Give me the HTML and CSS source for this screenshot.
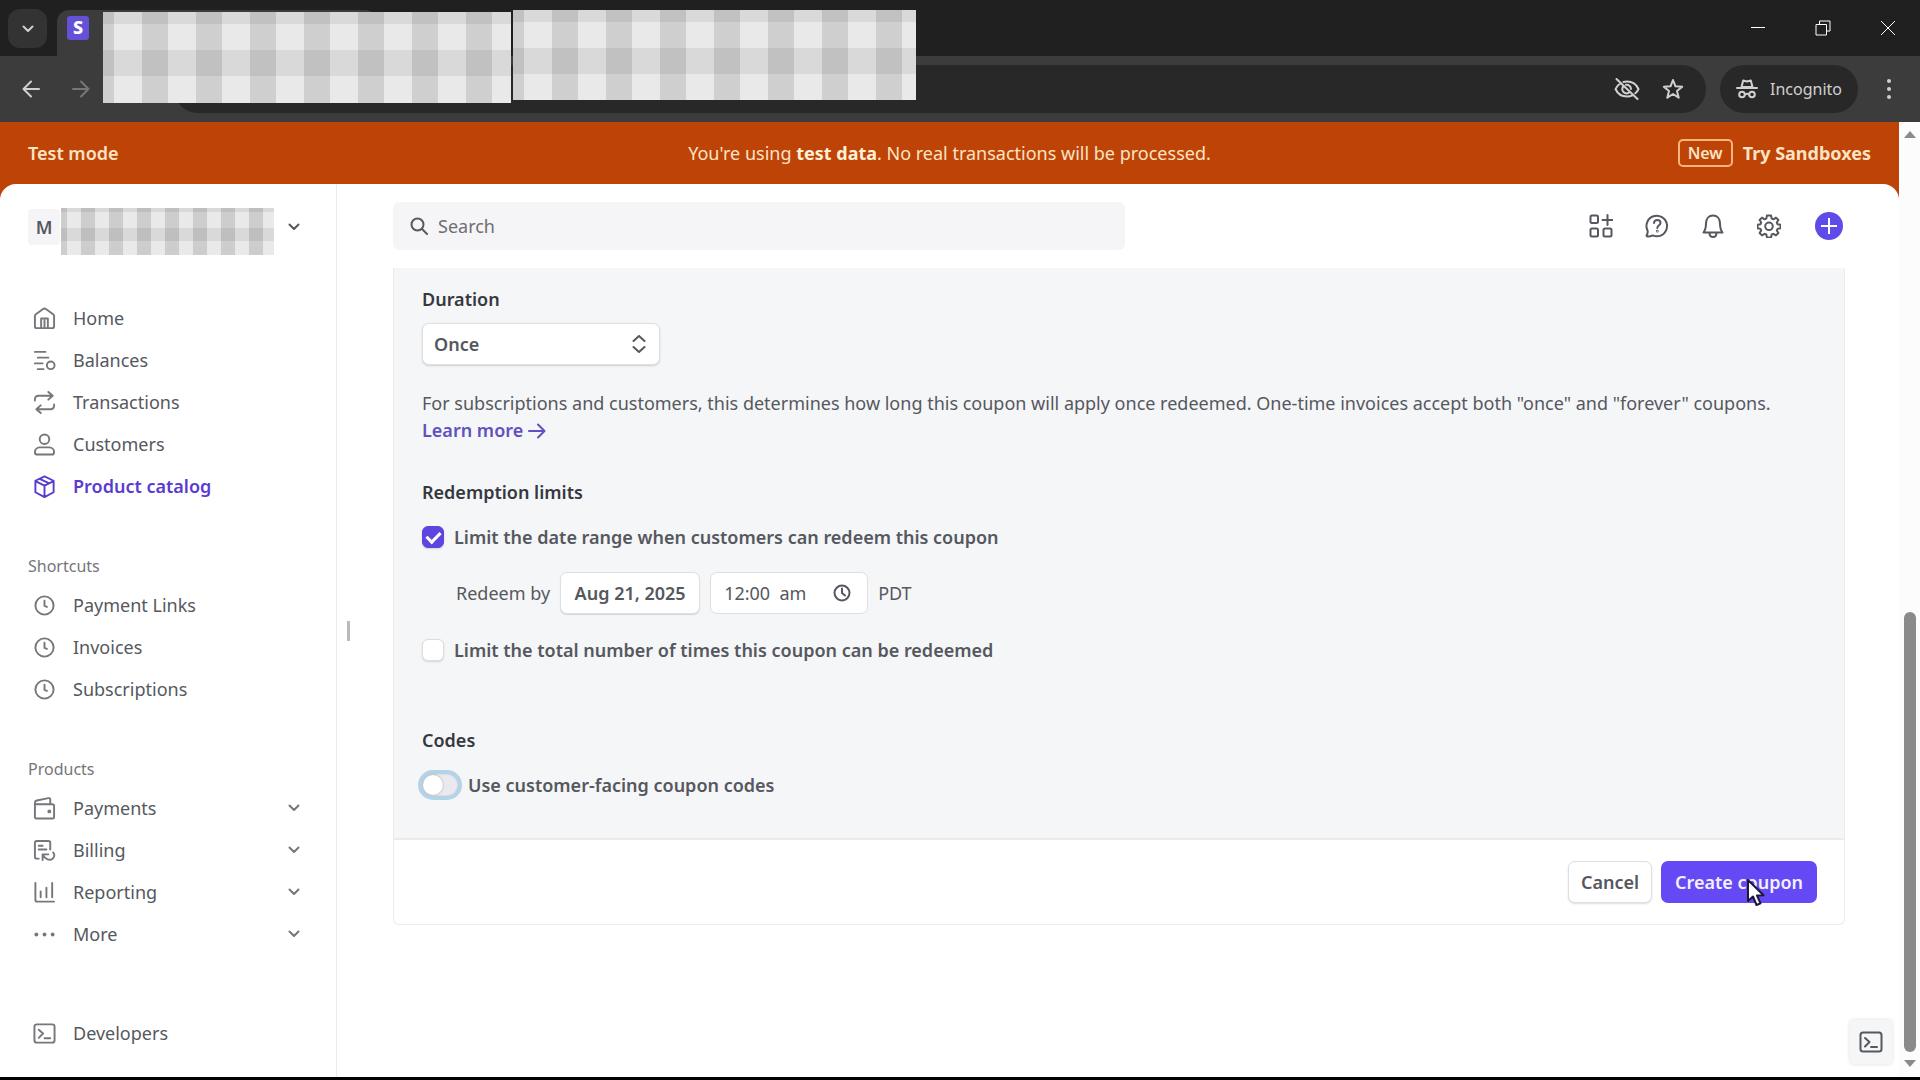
FILE: index.html
```html
<!DOCTYPE html>
<html lang="en">
<head>
    <meta charset="UTF-8">
    <meta name="viewport" content="width=device-width, initial-scale=1.0">
    <title>Create a coupon</title>
    <link rel="stylesheet" href="styles.css">
</head>
<body>
    <header class="browser">
        <div class="tab-strip">
            <button class="tab-search" aria-label="Search tabs">
                <svg width="12" height="8" viewBox="0 0 12 8"><path d="M1.500 1.500L6 6l4.500-4.500"/></svg>
            </button>
            <div class="tab"><span class="favicon">S</span></div>
            <div class="window-buttons">
                <button aria-label="Minimize"><svg width="16" height="16" viewBox="0 0 16 16"><path d="M1 7.500h14"/></svg></button>
                <button aria-label="Restore"><svg width="16" height="16" viewBox="0 0 16 16"><path d="M1 4.500h10.500V15H1zM4.500 4V1H15v10h-3"/></svg></button>
                <button aria-label="Close"><svg width="16" height="16" viewBox="0 0 16 16"><path d="M1 1l14 14M15 1L1 15"/></svg></button>
            </div>
        </div>
        <div class="toolbar">
            <button class="nav-btn" aria-label="Back"><svg width="18" height="18" viewBox="0 0 18 18"><path d="M17 9H2M9 1.500L1.500 9 9 16.500"/></svg></button>
            <button class="nav-btn dim" aria-label="Forward"><svg width="18" height="18" viewBox="0 0 18 18"><path d="M1 9h15M9 1.500L16.500 9 9 16.500"/></svg></button>
            <div class="address">
                <svg width="26" height="22" viewBox="0 0 26 22"><path d="M7 5C4.500 6.500 2.500 8.500 1.500 11c2 4.500 6 7.500 11.500 7.500 2 0 4-.5 5.500-1.200M9.500 4c1-.3 2.300-.5 3.500-.5 5.500 0 9.500 3 11.500 7.500-.7 1.700-1.800 3.200-3.200 4.300M2.500 1l21 20M9 8.500c-1 2-1 4 .5 5.500s3.500 1.700 5 .8M12 6.800c2.500-.5 5 1.500 5 4.200"/></svg>
                <svg width="22" height="22" viewBox="0 0 22 22"><path d="M11 2l2.500 6.300 6.700.5-5.200 4.300 1.700 6.600L11 16l-5.700 3.700L7 13.100 1.800 8.800l6.700-.5z"/></svg>
            </div>
            <div class="incognito">
                <svg width="22" height="20" viewBox="0 0 22 20"><path d="M5.500 8l1.700-6.500 3.800 1 3.800-1L16.500 8zM1 9h20M9 15.500c1.200-.8 2.800-.8 4 0"/><circle cx="6" cy="15.500" r="2.800"/><circle cx="16" cy="15.500" r="2.800"/></svg>
                <span>Incognito</span>
            </div>
            <button class="menu-btn" aria-label="Menu"><svg width="6" height="22" viewBox="0 0 6 22"><circle cx="3" cy="3" r="2"/><circle cx="3" cy="11" r="2"/><circle cx="3" cy="19" r="2"/></svg></button>
        </div>
        <div class="mosaic mosaic-one"></div>
        <div class="mosaic mosaic-two"></div>
    </header>

    <div class="viewport">
        <div class="page">
            <div class="banner">
                <span class="mode">Test mode</span>
                <span class="notice">You're using <b>test data</b>. No real transactions will be processed.</span>
                <span class="sandbox"><span class="new">New</span><a href="#">Try Sandboxes</a></span>
            </div>

            <div class="sheet">
                <aside class="sidebar">
                    <button class="account" aria-label="Account">
                        <span class="initial">M</span>
                        <span class="mosaic-small"></span>
                        <svg class="chevron" width="12" height="8" viewBox="0 0 12 8"><path d="M1.500 1.500L6 6l4.500-4.500"/></svg>
                    </button>

                    <nav class="group">
                        <a href="#"><svg viewBox="0 0 24 24"><path d="M2 9.500C2 8.500 2.400 8 3 7.500L10.500 2c1-.7 2-.7 3 0L21 7.500c.6.500 1 1 1 2V20a2 2 0 0 1-2 2H4a2 2 0 0 1-2-2zM8.500 22V12h7v10M12 14v8"/></svg>Home</a>
                        <a href="#"><svg viewBox="0 0 24 24"><path d="M2 3h11M5 9h11M2 15h8M5 21h6"/><circle cx="18.500" cy="17" r="4"/></svg>Balances</a>
                        <a href="#"><svg viewBox="0 0 24 24"><path d="M2 10V8.500A3.500 3.500 0 0 1 5.500 5H20M16 1l4.500 4L16 9M22 14v1.500a3.500 3.500 0 0 1-3.500 3.500H4M8 15l-4.500 4L8 23"/></svg>Transactions</a>
                        <a href="#"><svg viewBox="0 0 24 24"><circle cx="12" cy="6.500" r="5"/><path d="M7 15h10c3 0 5 2.500 5 5 0 1.500-1 2.500-2.500 2.500h-15C3 22.500 2 21.500 2 20c0-2.500 2-5 5-5z"/></svg>Customers</a>
                        <a href="#" class="active"><svg viewBox="0 0 24 24"><path d="M12 1.500L21.500 6v12L12 23 2.500 18V6zM2.500 6.500L12 11l9.500-4.500M12 11v12M7 4l9.500 4.500"/></svg>Product catalog</a>
                    </nav>

                    <h2>Shortcuts</h2>
                    <nav class="group">
                        <a href="#"><svg viewBox="0 0 24 24"><circle cx="12" cy="12" r="9.500"/><path d="M12 7v5.500l2.500 1"/></svg>Payment Links</a>
                        <a href="#"><svg viewBox="0 0 24 24"><circle cx="12" cy="12" r="9.500"/><path d="M12 7v5.500l2.500 1"/></svg>Invoices</a>
                        <a href="#"><svg viewBox="0 0 24 24"><circle cx="12" cy="12" r="9.500"/><path d="M12 7v5.500l2.500 1"/></svg>Subscriptions</a>
                    </nav>

                    <h2>Products</h2>
                    <nav class="group">
                        <a href="#"><svg viewBox="0 0 24 24"><path d="M2 7.500h18a2 2 0 0 1 2 2V21a1.500 1.500 0 0 1-1.500 1.500h-17A1.500 1.500 0 0 1 2 21V6c0-1.200.7-2 2-2.300L16 1.200c1.200-.2 2 .3 2 1.500V7"/><circle cx="17" cy="15" r="1"/></svg>Payments
                            <svg class="chevron" viewBox="0 0 12 8"><path d="M1.500 1.500L6 6l4.500-4.500"/></svg></a>
                        <a href="#"><svg viewBox="0 0 24 24"><path d="M6 20.500H4a2 2 0 0 1-2-2V4a2 2 0 0 1 2-2h12a2 2 0 0 1 2 2v7M6 7h4M6 11h8M10 22v-6h6M10.500 16.500c2 5 7 6.500 10 4 2.500-2 2-5 .5-6.500"/></svg>Billing
                            <svg class="chevron" viewBox="0 0 12 8"><path d="M1.500 1.500L6 6l4.500-4.500"/></svg></a>
                        <a href="#"><svg viewBox="0 0 24 24"><path d="M2.500 2v17.500a2 2 0 0 0 2 2H22M8 11v6M14 7v10M20 2v15"/></svg>Reporting
                            <svg class="chevron" viewBox="0 0 12 8"><path d="M1.500 1.500L6 6l4.500-4.500"/></svg></a>
                        <a href="#"><svg class="dots" viewBox="0 0 24 24"><circle cx="3.500" cy="12" r="2"/><circle cx="12" cy="12" r="2"/><circle cx="20.500" cy="12" r="2"/></svg>More
                            <svg class="chevron" viewBox="0 0 12 8"><path d="M1.500 1.500L6 6l4.500-4.500"/></svg></a>
                    </nav>

                    <nav class="group developers">
                        <a href="#"><svg viewBox="0 0 24 24"><rect x="1.500" y="2.500" width="21" height="19" rx="2.500"/><path d="M6 8l4.500 4L6 16.500M12 17h6"/></svg>Developers</a>
                    </nav>
                </aside>

                <div class="handle"></div>

                <main>
                    <div class="topbar">
                        <label class="search">
                            <svg width="18" height="18" viewBox="0 0 18 18"><circle cx="7.500" cy="7.500" r="6"/><path d="M12 12l5 5"/></svg>
                            <input type="text" placeholder="Search" aria-label="Search">
                        </label>
                        <div class="tools">
                            <button aria-label="Apps"><svg viewBox="0 0 24 24"><rect x="1.500" y="1.500" width="7.500" height="7.500" rx="1.500"/><rect x="1.500" y="14.500" width="7.500" height="8" rx="1.500"/><rect x="14.500" y="14.500" width="8" height="8" rx="1.500"/><path d="M18.500 1v10M13.500 6h10"/></svg></button>
                            <button aria-label="Help"><svg viewBox="0 0 24 24"><path d="M3 22.500c-1.300.2-1.800-.5-1.200-1.600.7-1.200 1-2.600.9-4A10.300 10.300 0 1 1 12 22.300c-1.800 0-3-.3-4.300-1-1.500.7-3 1.100-4.700 1.200zM9 9c.2-2 1.500-3 3.300-3s3.200 1.200 3.200 2.900c0 2.300-3.200 2.400-3.200 5.100"/><circle cx="12.300" cy="17.200" r=".4"/></svg></button>
                            <button aria-label="Notifications"><svg viewBox="0 0 24 24"><path d="M2.500 18.500c2-2.500 2.500-5.500 2.500-9C5 4.500 8 1.500 12 1.500s7 3 7 8c0 3.500.5 6.500 2.500 9zM8.500 19c0 2.300 1.500 4 3.500 4s3.500-1.700 3.500-4"/></svg></button>
                            <button aria-label="Settings"><svg viewBox="0 0 24 24"><path d="M10 1.500h4l.7 3 1.700.8L19 3.600 21.400 6l-1.600 2.600.7 1.600 3 .6v3.400l-3 .7-.7 1.500 1.600 2.600-2.400 2.400-2.600-1.600-1.700.7-.7 3h-4l-.7-3-1.700-.7L5 21.400 2.600 19l1.600-2.600-.7-1.500-3-.7v-3.400l3-.6.7-1.600L2.600 6 5 3.600l2.600 1.700 1.700-.8z"/><circle cx="12" cy="12.300" r="3.800"/></svg></button>
                            <button class="plus" aria-label="Create"><svg width="16" height="16" viewBox="0 0 16 16"><path d="M8 0v16M0 8h16"/></svg></button>
                        </div>
                    </div>

                    <form class="card" onsubmit="return false">
                        <div class="card-body">
                            <label class="title" for="duration">Duration</label>
                            <div class="select">
                                <select id="duration">
                                    <option>Once</option>
                                    <option>Forever</option>
                                    <option>Multiple months</option>
                                </select>
                                <svg width="14" height="18" viewBox="0 0 14 18"><path d="M1.500 6L7 1l5.500 5M1.500 12L7 17l5.500-5"/></svg>
                            </div>
                            <p class="help">For subscriptions and customers, this determines how long this coupon will apply once redeemed. One-time invoices accept both "once" and "forever" coupons.
                                <a href="#">Learn more <svg width="18" height="16" viewBox="0 0 18 16"><path d="M1 8h15M10 1.500L16.500 8 10 14.500"/></svg></a></p>

                            <h3 class="title">Redemption limits</h3>
                            <label class="check"><input type="checkbox" checked>Limit the date range when customers can redeem this coupon</label>
                            <div class="redeem">
                                <span>Redeem by</span>
                                <button type="button" class="date">Aug 21, 2025</button>
                                <div class="time">
                                    <input type="text" value="12:00  am" aria-label="Redeem by time">
                                    <svg width="18" height="18" viewBox="0 0 18 18"><circle cx="9" cy="9" r="7.500"/><path d="M9 4.500V9l3 2.500"/></svg>
                                </div>
                                <span>PDT</span>
                            </div>
                            <label class="check"><input type="checkbox">Limit the total number of times this coupon can be redeemed</label>

                            <h3 class="title codes">Codes</h3>
                            <label class="check toggle"><input type="checkbox">Use customer-facing coupon codes</label>
                        </div>
                        <div class="card-footer">
                            <button type="button" class="cancel">Cancel</button>
                            <button type="submit" class="create">Create coupon
                                <svg class="cursor" width="18" height="28" viewBox="0 0 18 28"><path d="M1 1v21l5-4.500 3.500 8.500 4-1.700L10 16.500l6.500-.3z"/></svg>
                            </button>
                        </div>
                    </form>
                </main>
            </div>
            <button class="console" aria-label="Open console"><svg viewBox="0 0 24 24"><rect x="1.500" y="2.500" width="21" height="19" rx="2.500"/><path d="M6 8l4.500 4L6 16.500M12 17h6"/></svg></button>
        </div>

        <div class="scrollbar">
            <span class="arrow-up"></span>
            <span class="thumb"></span>
            <span class="arrow-down"></span>
        </div>
    </div>
</body>
</html>
```

FILE: styles.css
```css
* {
    box-sizing: border-box;
}
body {
    margin: 0;
    height: 100vh;
    display: flex;
    flex-direction: column;
    overflow: hidden;
    border-bottom: 3px solid #000;
    font-family: "Noto Sans", "Open Sans", sans-serif;
    font-size: 18px;
    color: #55585e;
    background: #fff;
}
button, input, select {
    font: inherit;
    color: inherit;
}
button {
    padding: 0;
    border: none;
    background: none;
    cursor: pointer;
}
svg {
    flex: none;
    fill: none;
    stroke: currentColor;
    stroke-width: 2;
    stroke-linecap: round;
    stroke-linejoin: round;
}
a {
    color: inherit;
    text-decoration: none;
}

/* browser chrome */
.browser {
    position: relative;
    color: #d0d0d0;
    background: #3c3c3c;
}
.browser button svg {
    display: block;
    margin: auto;
}
.tab-strip {
    display: flex;
    align-items: flex-end;
    height: 56px;
    padding-left: 8px;
    background: #202020;
}
.tab-search {
    width: 39px;
    height: 39px;
    margin: 0 10px 8px 0;
    border-radius: 12px;
    background: #333;
}
.tab {
    width: 320px;
    height: 46px;
    padding: 6px 10px;
    border-radius: 12px 12px 0 0;
    background: #3c3c3c;
}
.favicon {
    display: block;
    width: 22px;
    height: 24px;
    border-radius: 3px;
    font-size: 18px;
    font-weight: 800;
    line-height: 23px;
    text-align: center;
    color: #fff;
    background: #6550d8;
}
.window-buttons {
    display: flex;
    height: 56px;
    margin-left: auto;
}
.window-buttons button {
    width: 65px;
}
.window-buttons svg {
    stroke-width: 1;
    stroke: #fff;
    stroke-linecap: butt;
    stroke-linejoin: miter;
}
.toolbar {
    display: flex;
    align-items: center;
    height: 66px;
    padding: 0 16px 0 8px;
}
.nav-btn {
    width: 46px;
    height: 40px;
    margin-right: 4px;
}
.dim {
    color: #777;
}
.address {
    display: flex;
    flex: 1;
    align-items: center;
    justify-content: flex-end;
    gap: 22px;
    height: 48px;
    margin-left: 66px;
    padding-right: 22px;
    border-radius: 24px;
    background: #282828;
}
.incognito {
    display: flex;
    align-items: center;
    justify-content: center;
    gap: 12px;
    width: 138px;
    height: 48px;
    margin-left: 14px;
    border-radius: 24px;
    font-size: 16px;
    background: #282828;
}
.menu-btn {
    width: 30px;
    margin-left: 16px;
}
.menu-btn svg {
    fill: currentColor;
    stroke: none;
}
.mosaic {
    position: absolute;
    background:
        repeating-linear-gradient(90deg, rgba(0, 0, 0, 0.11) 0 11px, transparent 11px 39px, rgba(0, 0, 0, 0.11) 39px 54px),
        linear-gradient(rgba(0, 0, 0, 0.07) 0 12px, transparent 12px 38px, rgba(0, 0, 0, 0.07) 38px 64px, transparent 64px),
        #e9e9e9;
}
.mosaic-one {
    top: 12px;
    left: 103px;
    width: 408px;
    height: 91px;
}
.mosaic-two {
    top: 10px;
    left: 513px;
    width: 403px;
    height: 90px;
}

.viewport {
    display: flex;
    flex: 1;
    min-height: 0;
}
.page {
    position: relative;
    display: flex;
    flex: 1;
    flex-direction: column;
    min-width: 0;
    background: #be4306;
}
.banner {
    display: grid;
    grid-template-columns: 1fr auto 1fr;
    align-items: center;
    height: 62px;
    padding: 0 28px;
    color: #fce3c4;
}
.mode {
    font-weight: 600;
}
.notice b {
    color: #fff0d8;
}
.sandbox {
    display: flex;
    align-items: center;
    justify-content: flex-end;
    gap: 10px;
    font-weight: 700;
}
.new {
    padding: 0 8px;
    border: 2px solid #f9b57c;
    border-radius: 5px;
    font-size: 16px;
    font-weight: 600;
    line-height: 24px;
}
.sheet {
    display: flex;
    flex: 1;
    min-height: 0;
    border-radius: 16px 16px 0 0;
    background: #fff;
}

/* sidebar */
.sidebar {
    display: flex;
    flex-direction: column;
    width: 337px;
    padding: 19px 28px 23px;
    border-right: 1px solid #ebebed;
}
.account {
    display: flex;
    align-items: center;
    height: 48px;
    margin-bottom: 46px;
}
.initial {
    width: 32px;
    height: 36px;
    border-radius: 4px;
    font-weight: 600;
    line-height: 36px;
    text-align: center;
    background: #f5f5f7;
}
.mosaic-small {
    width: 213px;
    height: 47px;
    margin: 8px 0 0 1px;
    background:
        repeating-linear-gradient(90deg, rgba(0, 0, 0, 0.12) 0 6px, transparent 6px 20px, rgba(0, 0, 0, 0.12) 20px 28px),
        linear-gradient(rgba(0, 0, 0, 0.07) 0 4px, transparent 4px 20px, rgba(0, 0, 0, 0.07) 20px 33px, transparent 33px),
        #e9e9e9;
}
.sidebar .chevron {
    width: 12px;
    height: 8px;
    margin-left: auto;
}
.account .chevron {
    margin-right: 8px;
}
.group a {
    display: flex;
    align-items: center;
    height: 42px;
    padding: 0 8px 0 5px;
}
.group svg {
    width: 23px;
    height: 23px;
    margin-right: 17px;
    color: #75777b;
}
.group .chevron {
    margin-right: 0;
}
.group .dots {
    fill: currentColor;
    stroke: none;
}
.group .active, .active svg {
    font-weight: 600;
    color: #5a3bd0;
}
.sidebar h2 {
    margin: 46px 0 5px;
    font-size: 16px;
    font-weight: 400;
    line-height: 26px;
    color: #74767b;
}
.developers {
    margin-top: auto;
}
.handle {
    align-self: center;
    width: 3px;
    height: 20px;
    margin: 0 43px 0 10px;
    background: #b9babd;
}

/* main area */
main {
    flex: 1;
    min-width: 0;
    padding: 18px 54px 0 0;
}
.topbar {
    display: flex;
    align-items: center;
    justify-content: space-between;
    height: 48px;
    margin-bottom: 18px;
}
.search {
    display: flex;
    align-items: center;
    gap: 10px;
    width: 732px;
    height: 48px;
    padding: 0 17px;
    border-radius: 6px;
    background: #f5f5f8;
}
.search input {
    flex: 1;
    padding: 0;
    border: none;
    outline: none;
    background: none;
}
.search input::placeholder {
    color: #6c6e73;
    opacity: 1;
}
.tools {
    display: flex;
    align-items: center;
    gap: 32px;
    padding-right: 2px;
}
.tools button, .tools svg {
    display: block;
    width: 24px;
    height: 24px;
}
.tools .plus {
    width: 28px;
    height: 28px;
    margin-left: 2px;
    padding: 6px;
    border-radius: 50%;
    color: #fff;
    background: #5f4be8;
}
.plus svg {
    width: 16px;
    height: 16px;
}
.card {
    border: 1px solid #ececee;
    border-top: none;
    border-radius: 0 0 6px 6px;
}
.card-body {
    padding: 18px 28px 40px;
    border-bottom: 2px solid #ebebed;
    background: #f5f6f8;
}
.title {
    display: block;
    margin: 0;
    font-size: 18px;
    font-weight: 600;
    line-height: 26px;
    color: #35383e;
}
.select {
    position: relative;
    width: 238px;
    margin: 11px 0 25px;
}
.select select {
    width: 100%;
    height: 42px;
    padding: 0 11px;
    border: 1px solid #dedfe2;
    border-radius: 7px;
    appearance: none;
    font-weight: 600;
    background: #fff;
    box-shadow: 0 1px 2px rgba(0, 0, 0, 0.16);
}
.select svg {
    position: absolute;
    top: 12px;
    right: 14px;
    pointer-events: none;
}
.help {
    margin: 0 0 35px;
    line-height: 27px;
}
.help a {
    display: block;
    font-weight: 600;
    color: #6250c0;
}
.help svg {
    vertical-align: -2px;
}
.check {
    display: flex;
    align-items: center;
    gap: 10px;
    height: 26px;
    font-weight: 600;
}
.title + .check {
    margin-top: 19px;
}
.check input {
    display: grid;
    place-items: center;
    width: 22px;
    height: 22px;
    margin: 0;
    border: 1px solid #dcdde0;
    border-radius: 6px;
    appearance: none;
    background: #fff;
    box-shadow: 0 1px 2px rgba(0, 0, 0, 0.14);
}
.check input:checked {
    border-color: #5f45e0;
    background: #5f45e0;
}
.check input:checked::after {
    content: "";
    width: 6px;
    height: 11px;
    margin-bottom: 3px;
    border: solid #fff;
    border-width: 0 3px 3px 0;
    transform: rotate(45deg);
}
.redeem {
    display: flex;
    align-items: center;
    gap: 10px;
    margin: 22px 0 23px 34px;
}
.date, .time {
    height: 42px;
    border: 1px solid #dedfe2;
    border-radius: 7px;
    background: #fff;
}
.date {
    width: 140px;
    font-weight: 600;
    box-shadow: 0 1px 1px rgba(0, 0, 0, 0.14);
}
.time {
    display: flex;
    align-items: center;
    width: 158px;
    padding: 0 16px 0 13px;
}
.time input {
    flex: 1;
    min-width: 0;
    padding: 0;
    border: none;
    outline: none;
    white-space: pre;
}
.codes {
    margin-top: 64px;
}
.toggle input {
    justify-content: start;
    width: 36px;
    border-radius: 11px;
    background: #e9e9ef;
    box-shadow: 0 0 0 4px #b3d3e9;
}
.toggle input::after {
    content: "";
    width: 20px;
    height: 20px;
    border-radius: 50%;
    background: #fff;
    box-shadow: 0 0 2px rgba(0, 0, 0, 0.35);
}
.card-footer {
    display: flex;
    justify-content: flex-end;
    gap: 9px;
    padding: 21px 27px;
}
.card-footer button {
    height: 42px;
    border-radius: 7px;
    font-weight: 600;
}
.cancel {
    width: 84px;
    border: 1px solid #dedfe2;
    background: #fff;
    box-shadow: 0 1px 2px rgba(0, 0, 0, 0.14);
}
.create {
    position: relative;
    width: 156px;
    color: #f3f0ff;
    background: #6449f5;
}
.cursor {
    position: absolute;
    top: 18px;
    left: 86px;
    fill: #fff;
    stroke: #1c1838;
}
.console {
    position: absolute;
    right: 7px;
    bottom: 13px;
    width: 42px;
    height: 44px;
    border-radius: 4px;
    background: #f5f6f8;
    box-shadow: 0 0 4px rgba(0, 0, 0, 0.14);
}
.console svg {
    display: block;
    width: 24px;
    height: 24px;
    margin: auto;
}

.scrollbar {
    display: flex;
    flex-direction: column;
    align-items: center;
    width: 21px;
    padding: 9px 0 10px;
    background: #fcfcfc;
}
.arrow-up, .arrow-down {
    border: 6px solid transparent;
}
.arrow-up {
    border-top: none;
    border-bottom: 7px solid #8a8a8a;
}
.arrow-down {
    border-bottom: none;
    border-top: 7px solid #8a8a8a;
}
.thumb {
    width: 12px;
    height: 47%;
    margin: auto 0 8px;
    border-radius: 6px;
    background: #8a8a8a;
}
```
